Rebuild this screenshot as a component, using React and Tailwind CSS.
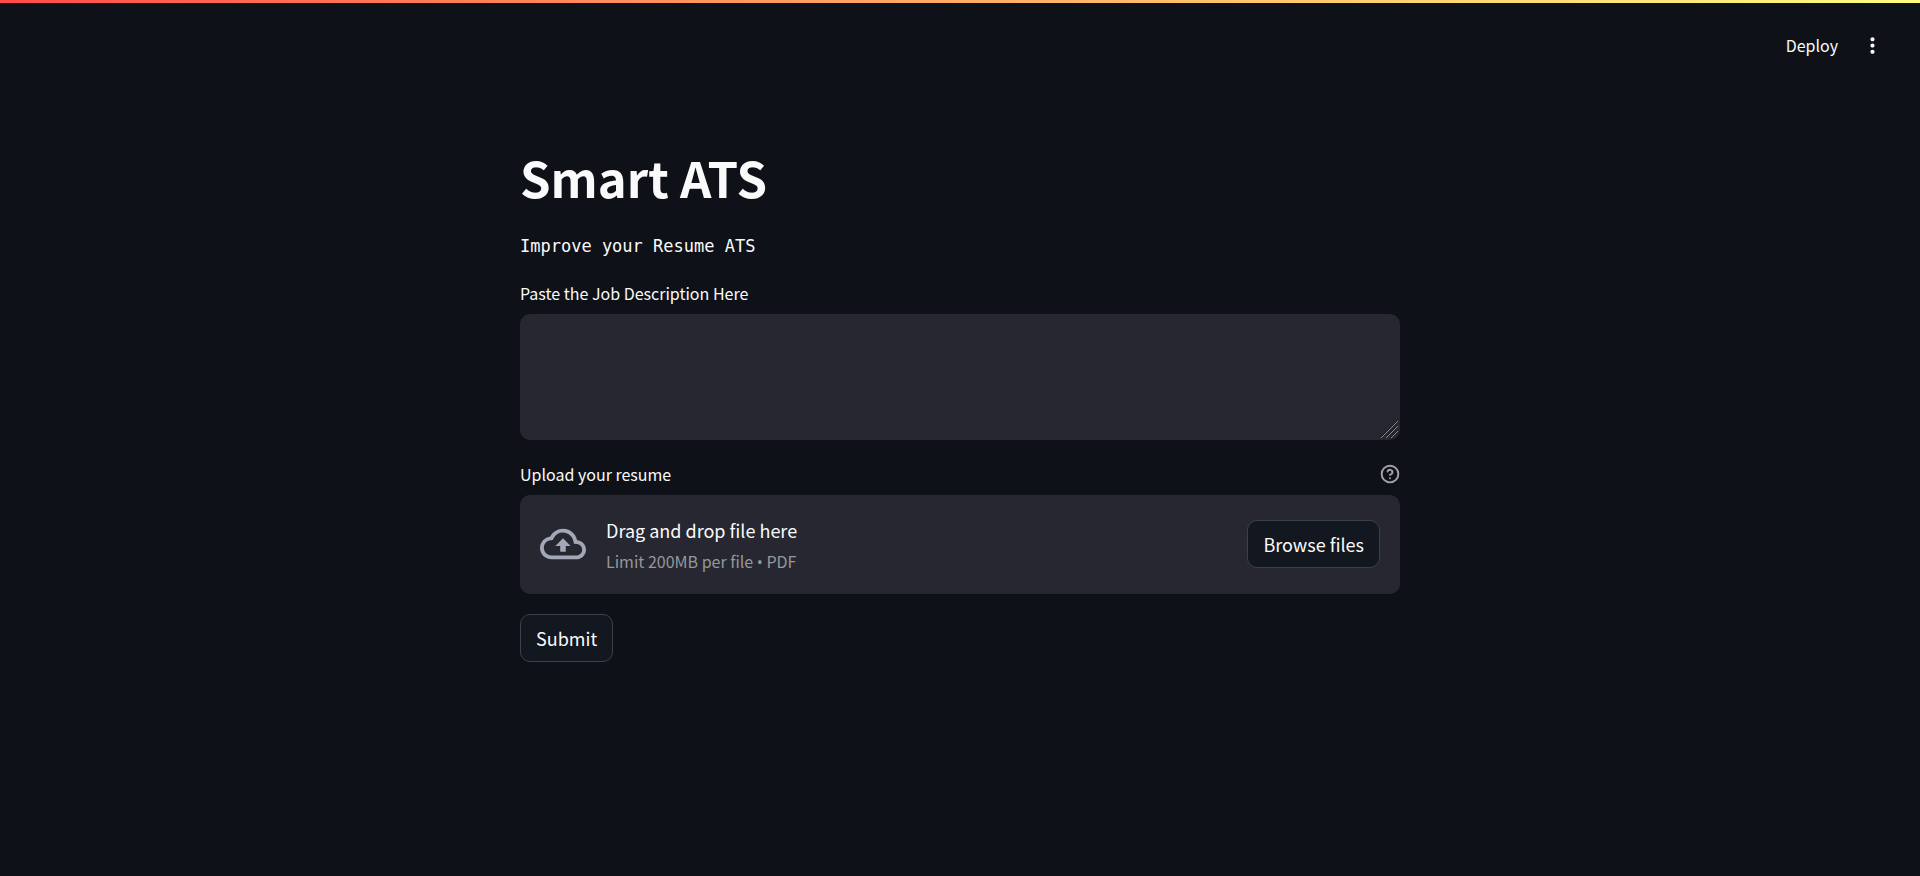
import { CircleHelp } from "lucide-react";
import { MdMoreVert, MdOutlineBackup } from "react-icons/md";

const buttonClass =
  "h-12 shrink-0 rounded-[10px] border border-[#3e4148] bg-[#131720] px-[15px] text-[18px] leading-8";

function Header() {
  return (
    <header>
      <div className="h-[3px] bg-linear-to-r from-[#ff4b4b] to-[#fffd80]" />
      <div className="flex items-center justify-end gap-[22px] pt-6 pr-[35px]">
        <button type="button" className="text-[16px] leading-9">
          Deploy
        </button>
        <button type="button" aria-label="Main menu">
          <MdMoreVert size={25} />
        </button>
      </div>
    </header>
  );
}

function ResizeGrip() {
  return (
    <svg
      aria-hidden="true"
      className="pointer-events-none absolute right-px bottom-px"
      width="18"
      height="18"
      viewBox="0 0 18 18"
      fill="none"
      strokeWidth="1"
    >
      <path d="M0 16L16 0M5 16L16 5M10 16L16 10" stroke="#17181d" />
      <path d="M0 17L17 0M5 17L17 5M10 17L17 10" stroke="#8d8e92" />
    </svg>
  );
}

export default function App() {
  return (
    <div className="min-h-screen bg-[#0e1117] font-['Noto_Sans_CJK_SC','Open_Sans',sans-serif] text-[#fafafa]">
      <Header />
      <main className="mx-auto max-w-[880px] pt-[81px] pb-10">
        <h1 className="text-[49px] leading-[66px] font-bold">Smart ATS</h1>
        <p className="mt-5 font-['DejaVu_Sans_Mono','Liberation_Mono',monospace] text-[17px] leading-8">
          Improve your Resume ATS
        </p>
        <form className="mt-[17px]">
          <label htmlFor="job" className="block pb-[7px] text-[16px] leading-7">
            Paste the Job Description Here
          </label>
          <div className="relative">
            <textarea
              id="job"
              className="block h-[126px] w-full resize-none rounded-[10px] bg-[#262730] p-5 text-[18px] outline-none"
            />
            <ResizeGrip />
          </div>
          <div className="mt-5 flex items-center justify-between pb-[7px]">
            <label htmlFor="resume" className="text-[16px] leading-7">
              Upload your resume
            </label>
            <button type="button" aria-label="Upload help" className="text-[#a3a4a7]">
              <CircleHelp size={20} strokeWidth={2.3} />
            </button>
          </div>
          <section className="flex items-center rounded-[10px] bg-[#262730] px-5 pt-4 pb-[17px]">
            <input id="resume" type="file" accept=".pdf" className="hidden" />
            <MdOutlineBackup size={46} className="mr-5 shrink-0 text-[#a3a8b8]" />
            <div className="grow pt-1">
              <div className="text-[18px] leading-[31px]">Drag and drop file here</div>
              <div className="text-[16px] leading-[31px] text-[#96979b]">
                Limit 200MB per file{" "}
                <span className="font-['Open_Sans',sans-serif] leading-none">•</span> PDF
              </div>
            </div>
            <button type="button" className={buttonClass}>
              Browse files
            </button>
          </section>
          <button type="submit" className={`mt-5 ${buttonClass}`}>
            Submit
          </button>
        </form>
      </main>
    </div>
  );
}
